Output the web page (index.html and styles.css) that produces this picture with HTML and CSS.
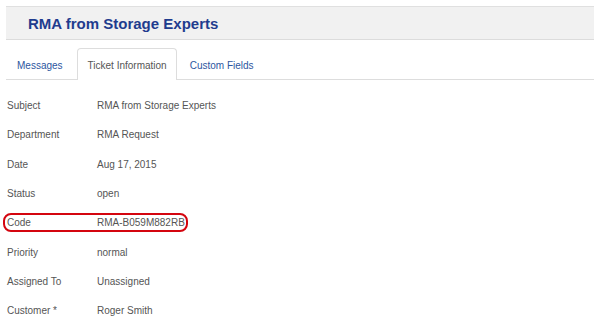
FILE: index.html
```html
<!DOCTYPE html>
<html>
<head>
<meta charset="utf-8">
<link rel="stylesheet" href="styles.css">
</head>
<body>
<div class="page">
  <div class="header"><h1 class="title">RMA from Storage Experts</h1></div>
  <div class="tabs">
    <div class="tab">Messages</div>
    <div class="tab active">Ticket Information</div>
    <div class="tab">Custom Fields</div>
  </div>
  <div class="info">
    <div class="row"><span class="label">Subject</span><span class="value">RMA from Storage Experts</span></div>
    <div class="row"><span class="label">Department</span><span class="value">RMA Request</span></div>
    <div class="row"><span class="label">Date</span><span class="value">Aug 17, 2015</span></div>
    <div class="row"><span class="label">Status</span><span class="value">open</span></div>
    <div class="row highlight"><span class="label">Code</span><span class="value">RMA-B059M882RB</span></div>
    <div class="row"><span class="label">Priority</span><span class="value">normal</span></div>
    <div class="row"><span class="label">Assigned To</span><span class="value">Unassigned</span></div>
    <div class="row"><span class="label">Customer *</span><span class="value">Roger Smith</span></div>
  </div>
</div>
</body>
</html>
```
FILE: styles.css
```css
html, body {
  margin: 0;
  padding: 0;
  background: #fff;
}
.page {
  font-family: "Liberation Sans", Arial, sans-serif;
  padding: 6px 6px 0 6px;
}
.header {
  background: #f1f1f1;
  border-top: 1px solid #e0e0e0;
  border-bottom: 1px solid #dcdcdc;
  height: 32px;
  display: flex;
  align-items: center;
  padding-left: 22px;
}
.title {
  margin: 0;
  font-size: 15px;
  font-weight: bold;
  color: #1f3c8e;
}
.tabs {
  margin-top: 8px;
  display: flex;
  border-bottom: 1px solid #dddddd;
  height: 31px;
}
.tab {
  font-size: 10px;
  color: #2d56a0;
  padding: 2px 11px 0 10px;
  margin-right: 2px;
  display: flex;
  align-items: center;
  height: 31px;
  border: 1px solid transparent;
  border-bottom: none;
  box-sizing: border-box;
}
.tab.active {
  background: #fff;
  color: #555;
  border-color: #dddddd;
  border-radius: 4px 4px 0 0;
  height: 32px;
  margin-bottom: -1px;
  padding: 2px 9px 0 10px;
}
.info {
  padding-top: 11px;
}
.row {
  display: grid;
  grid-template-columns: 90px 1fr;
  height: 29.3px;
  align-items: center;
  font-size: 10px;
  color: #555;
  position: relative;
  margin-left: -6px;
  padding-left: 7px;
}
.highlight::before {
  content: "";
  position: absolute;
  left: 3px;
  top: 5px;
  width: 181px;
  height: 15px;
  border: 2px solid #d4050f;
  border-radius: 8px;
}
```
